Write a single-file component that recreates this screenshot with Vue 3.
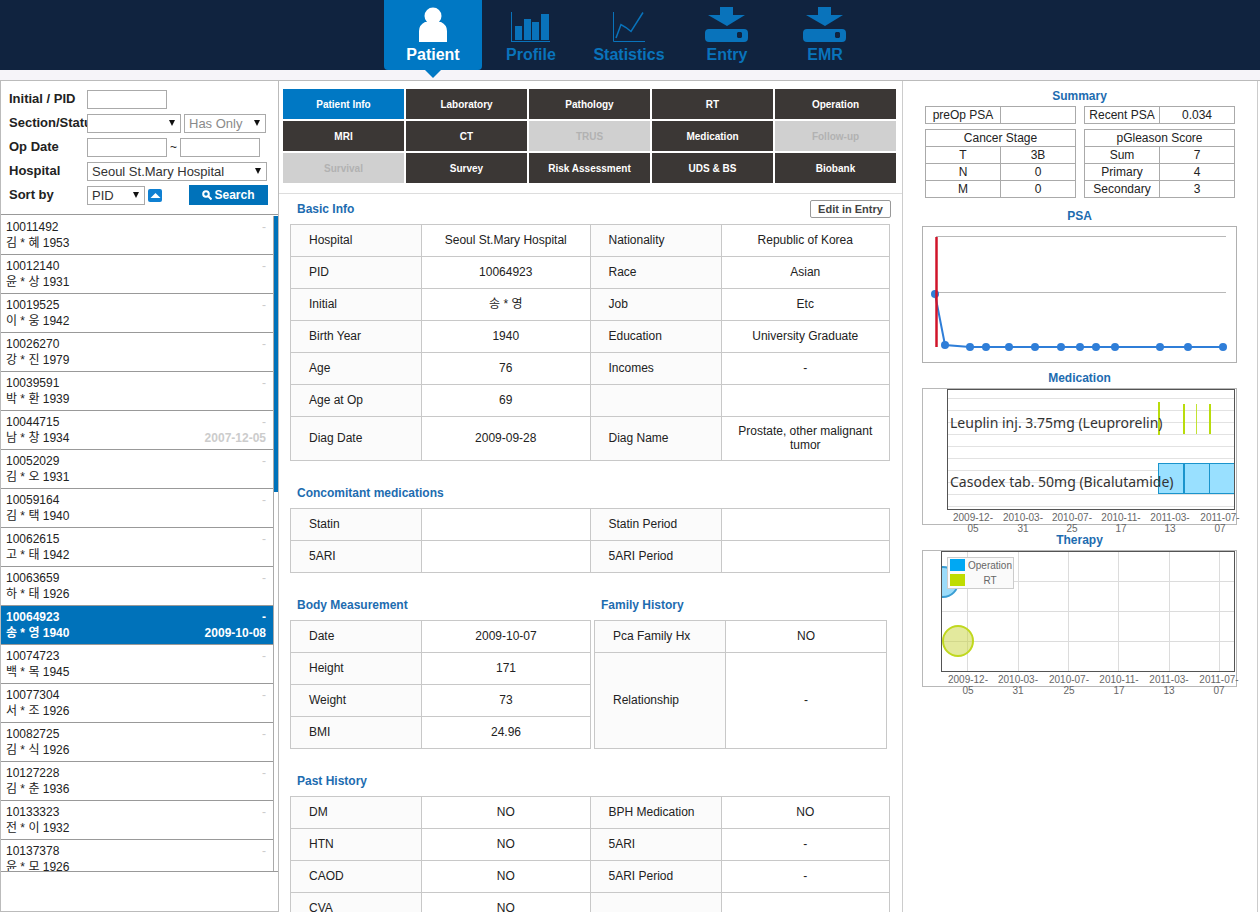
<script setup>
import { ref } from 'vue'

const nav = [
  { label: 'Patient', icon: 'person' },
  { label: 'Profile', icon: 'bars' },
  { label: 'Statistics', icon: 'line' },
  { label: 'Entry', icon: 'drive' },
  { label: 'EMR', icon: 'drive' },
]
const activeNav = ref('Patient')

const patients = [
  { id: '10011492', name: '김 * 혜 1953' },
  { id: '10012140', name: '윤 * 상 1931' },
  { id: '10019525', name: '이 * 웅 1942' },
  { id: '10026270', name: '강 * 진 1979' },
  { id: '10039591', name: '박 * 환 1939' },
  { id: '10044715', name: '남 * 창 1934', date: '2007-12-05' },
  { id: '10052029', name: '김 * 오 1931' },
  { id: '10059164', name: '김 * 택 1940' },
  { id: '10062615', name: '고 * 태 1942' },
  { id: '10063659', name: '하 * 태 1926' },
  { id: '10064923', name: '송 * 영 1940', date: '2009-10-08' },
  { id: '10074723', name: '백 * 목 1945' },
  { id: '10077304', name: '서 * 조 1926' },
  { id: '10082725', name: '김 * 식 1926' },
  { id: '10127228', name: '김 * 춘 1936' },
  { id: '10133323', name: '전 * 이 1932' },
  { id: '10137378', name: '윤 * 모 1926' },
]
const selected = ref('10064923')

const tabs = [
  'Patient Info', 'Laboratory', 'Pathology', 'RT', 'Operation',
  'MRI', 'CT', 'TRUS', 'Medication', 'Follow-up',
  'Survival', 'Survey', 'Risk Assessment', 'UDS & BS', 'Biobank',
]
const disabledTabs = ['TRUS', 'Follow-up', 'Survival']
const activeTab = ref('Patient Info')

const basic = [
  ['Hospital', 'Seoul St.Mary Hospital', 'Nationality', 'Republic of Korea'],
  ['PID', '10064923', 'Race', 'Asian'],
  ['Initial', '송 * 영', 'Job', 'Etc'],
  ['Birth Year', '1940', 'Education', 'University Graduate'],
  ['Age', '76', 'Incomes', '-'],
  ['Age at Op', '69', '', ''],
  ['Diag Date', '2009-09-28', 'Diag Name', 'Prostate, other malignant tumor'],
]
const concomitant = [
  ['Statin', '', 'Statin Period', ''],
  ['5ARI', '', '5ARI Period', ''],
]
const body = [
  ['Date', '2009-10-07'],
  ['Height', '171'],
  ['Weight', '73'],
  ['BMI', '24.96'],
]
const past = [
  ['DM', 'NO', 'BPH Medication', 'NO'],
  ['HTN', 'NO', '5ARI', '-'],
  ['CAOD', 'NO', '5ARI Period', '-'],
  ['CVA', 'NO', '', ''],
]

const psa = [[13, 68], [23, 119], [48, 121], [64, 121], [87, 121], [113, 121], [139, 121], [158, 121], [174, 121], [193, 121], [238, 121], [266, 121], [301, 121]]
const psaLine = psa.map((p) => p.join(',')).join(' ')
const ticks = [['2009-12-', '05'], ['2010-03-', '31'], ['2010-07-', '25'], ['2010-11-', '17'], ['2011-03-', '13'], ['2011-07-', '07']]
const medX = [51, 101, 150, 199, 248, 298]
const therapyX = [46, 96, 147, 197, 247, 297]
</script>

<template>
  <div class="app">
    <header class="top">
      <nav class="nav">
        <a v-for="n in nav" :key="n.label" href="#" :class="{ on: activeNav === n.label }" @click.prevent="activeNav = n.label">
          <svg width="48" height="45" viewBox="0 0 48 45" fill="currentColor" aria-hidden="true">
            <g v-if="n.icon === 'person'">
              <circle cx="24" cy="16" r="8.500" />
              <path d="M10 42V31q0-6 6-9q8 4 16 0q6 3 6 9v11z" />
              <path d="M16 22h16v10H16z" />
            </g>
            <g v-else-if="n.icon === 'bars'">
              <path d="M4 12h1v29h38v1H4z" />
              <path d="M8 26h7v14H8zM17 19h7v21h-7zM25 22h7v18h-7zM34 14h8v26h-8z" />
            </g>
            <g v-else-if="n.icon === 'line'" fill="none" stroke="currentColor">
              <path d="M8.500 12v29.500H40" />
              <path d="M11 38L16 24.500L21 27.500L26 31.500L38 12.500" stroke-width="1.500" />
            </g>
            <g v-else>
              <path d="M17 7h13v8h12L24 26L5 15h12z" />
              <path fill-rule="evenodd" d="M6 29h35q4 0 4 4v5q0 4-4 4H6q-4 0-4-4v-5q0-4 4-4zM34 33v4l1 1h3l1-1v-4l-1-1h-3z" />
            </g>
          </svg>
          <span>{{ n.label }}</span>
        </a>
      </nav>
    </header>

    <div class="columns">
      <aside class="left">
        <form class="search" @submit.prevent>
          <div class="row">
            <label for="pid">Initial / PID</label>
            <input id="pid" type="text" />
          </div>
          <div class="row">
            <label for="section">Section/Status</label>
            <span class="select section"><select id="section"><option></option></select></span>
            <span class="select only"><select aria-label="Has Only"><option>Has Only</option></select></span>
          </div>
          <div class="row">
            <label for="from">Op Date</label>
            <input id="from" type="text" />
            <span class="tilde">~</span>
            <input type="text" aria-label="Op Date to" />
          </div>
          <div class="row">
            <label for="hospital">Hospital</label>
            <span class="select hospital"><select id="hospital"><option>Seoul St.Mary Hospital</option></select></span>
          </div>
          <div class="row">
            <label for="sort">Sort by</label>
            <span class="select sort"><select id="sort"><option>PID</option></select></span>
            <button class="dir" type="button" aria-label="Ascending">
              <svg width="13" height="13" viewBox="0 0 13 13"><path d="M1.500 9L6.500 4L11.500 9z" fill="#fff" /></svg>
            </button>
            <button class="go" type="submit">
              <svg width="10" height="10" viewBox="0 0 10 10" fill="none" stroke="#fff" stroke-width="2"><circle cx="4" cy="4" r="2.800" /><path d="M6 6l3.500 3.500" /></svg>
              Search
            </button>
          </div>
        </form>
        <div class="listbox">
          <ul>
            <li v-for="p in patients" :key="p.id">
              <a href="#" :class="{ on: selected === p.id }" @click.prevent="selected = p.id">
                <span>{{ p.id }}<br />{{ p.name }}</span>
                <span class="when"><span class="dash">-</span><b>{{ p.date }}</b></span>
              </a>
            </li>
          </ul>
          <i class="thumb"></i>
        </div>
      </aside>

      <main>
        <div class="tabs">
          <button v-for="t in tabs" :key="t" type="button" :disabled="disabledTabs.includes(t)" :class="{ on: activeTab === t }" @click="activeTab = t">{{ t }}</button>
        </div>
        <div class="detail">
          <div class="head first"><h2>Basic Info</h2><button type="button" class="edit">Edit in Entry</button></div>
          <table class="info four basic">
            <tbody>
              <tr v-for="r in basic" :key="r[0]"><th>{{ r[0] }}</th><td>{{ r[1] }}</td><th>{{ r[2] }}</th><td>{{ r[3] }}</td></tr>
            </tbody>
          </table>
          <div class="head"><h2>Concomitant medications</h2></div>
          <table class="info four">
            <tbody>
              <tr v-for="r in concomitant" :key="r[0]"><th>{{ r[0] }}</th><td>{{ r[1] }}</td><th>{{ r[2] }}</th><td>{{ r[3] }}</td></tr>
            </tbody>
          </table>
          <div class="pair">
            <section>
              <div class="head"><h2>Body Measurement</h2></div>
              <table class="info two">
                <tbody>
                  <tr v-for="r in body" :key="r[0]"><th>{{ r[0] }}</th><td>{{ r[1] }}</td></tr>
                </tbody>
              </table>
            </section>
            <section>
              <div class="head"><h2>Family History</h2></div>
              <table class="info two">
                <tbody>
                  <tr><th>Pca Family Hx</th><td>NO</td></tr>
                  <tr class="tall"><th>Relationship</th><td>-</td></tr>
                </tbody>
              </table>
            </section>
          </div>
          <div class="head"><h2>Past History</h2></div>
          <table class="info four">
            <tbody>
              <tr v-for="r in past" :key="r[0]"><th>{{ r[0] }}</th><td>{{ r[1] }}</td><th>{{ r[2] }}</th><td>{{ r[3] }}</td></tr>
            </tbody>
          </table>
        </div>
      </main>

      <aside class="right">
        <h2 class="sum">Summary</h2>
        <div class="summary">
          <table><tbody><tr><td>preOp PSA</td><td></td></tr></tbody></table>
          <table><tbody><tr><td>Recent PSA</td><td>0.034</td></tr></tbody></table>
          <table>
            <tbody>
              <tr><td colspan="2">Cancer Stage</td></tr>
              <tr><td>T</td><td>3B</td></tr>
              <tr><td>N</td><td>0</td></tr>
              <tr><td>M</td><td>0</td></tr>
            </tbody>
          </table>
          <table>
            <tbody>
              <tr><td colspan="2">pGleason Score</td></tr>
              <tr><td>Sum</td><td>7</td></tr>
              <tr><td>Primary</td><td>4</td></tr>
              <tr><td>Secondary</td><td>3</td></tr>
            </tbody>
          </table>
        </div>

        <h2 class="psa">PSA</h2>
        <svg class="chart" viewBox="0 0 315 137">
          <rect x="0.500" y="0.500" width="314" height="136" fill="#fff" stroke="#b0b0b0" />
          <path d="M14 10.500H304M14 66.500H304" stroke="#b8b8b8" />
          <polyline :points="psaLine" fill="none" stroke="#2f7ed8" stroke-width="2" />
          <circle v-for="p in psa" :key="p[0]" :cx="p[0]" :cy="p[1]" r="4" fill="#2f7ed8" />
          <path d="M14.500 11V121" stroke="#d0142a" stroke-width="2.500" />
        </svg>

        <h2>Medication</h2>
        <svg class="chart" viewBox="0 0 315 137">
          <rect x="0.500" y="0.500" width="314" height="136" fill="#fff" stroke="#b8b8b8" />
          <path v-for="i in 10" :key="i" :d="`M26 ${i * 12 - 1.5}H312`" stroke="#e2e2e2" />
          <path d="M237 14V47" stroke="#b9dc0c" stroke-width="2" />
          <path d="M262 16V46M288 16V46" stroke="#b9dc0c" stroke-width="2" />
          <path d="M274.500 16V46" stroke="#c3e332" />
          <rect x="236.500" y="75.500" width="76" height="30" fill="#99e0ff" stroke="#1a94cc" />
          <path d="M262 75V106" stroke="#1a94cc" stroke-width="2" />
          <path d="M287.500 75V106" stroke="#1a94cc" />
          <rect x="25.500" y="1.500" width="287" height="120" fill="none" stroke="#545454" />
          <text class="drug" x="28" y="40">Leuplin inj. 3.75mg (Leuprorelin)</text>
          <text class="drug" x="28" y="99">Casodex tab. 50mg (Bicalutamide)</text>
          <g v-for="(t, i) in ticks" :key="t[0] + t[1]" class="tick">
            <text :x="medX[i]" y="133">{{ t[0] }}</text>
            <text :x="medX[i]" y="144">{{ t[1] }}</text>
          </g>
        </svg>

        <h2>Therapy</h2>
        <svg class="chart" viewBox="0 0 315 137">
          <clipPath id="plot"><rect x="19" y="1" width="294" height="121" /></clipPath>
          <rect x="0.500" y="0.500" width="314" height="136" fill="#fff" stroke="#b8b8b8" />
          <path d="M19 31.500H312M19 61.500H312M19 91.500H312M45.500 1V121M96.500 1V121M146.500 1V121M196.500 1V121M247.500 1V121M297.500 1V121" stroke="#dcdcdc" />
          <g clip-path="url(#plot)" stroke-width="2">
            <circle cx="21" cy="32" r="15" fill="#9bdcfa" stroke="#3a9ed4" />
            <circle cx="36" cy="91" r="15" fill="#c8d43c" fill-opacity="0.500" stroke="#c0d81e" />
          </g>
          <rect x="19.500" y="1.500" width="293" height="120" fill="none" stroke="#545454" />
          <rect x="25.500" y="7.500" width="66" height="31" fill="#fafafa" stroke="#ccc" />
          <rect x="28" y="9" width="15" height="12" fill="#00a8f3" />
          <rect x="28" y="24" width="15" height="12" fill="#bfdc00" />
          <g class="tick">
            <text x="68" y="19">Operation</text>
            <text x="68" y="34">RT</text>
          </g>
          <g v-for="(t, i) in ticks" :key="t[0] + t[1]" class="tick">
            <text :x="therapyX[i]" y="133">{{ t[0] }}</text>
            <text :x="therapyX[i]" y="144">{{ t[1] }}</text>
          </g>
        </svg>
      </aside>
    </div>
  </div>
</template>

<style>
body {
  background: #fff;
}
</style>

<style scoped>
.app {
  height: 100vh;
  overflow: hidden;
  display: flex;
  flex-direction: column;
  background: #f6f4f9;
  color: #222;
  font: 12px/16px "Liberation Sans", "Noto Sans CJK KR", sans-serif;
}
.app *,
.app *::after {
  box-sizing: border-box;
}
button,
input,
select {
  font-family: inherit;
  margin: 0;
}
h2 {
  margin: 0;
  font-size: 12px;
  line-height: 16px;
  color: #1d6cb0;
}
.top {
  flex: none;
  height: 70px;
  background: #10233f;
  padding-right: 2px;
}
.nav {
  display: flex;
  justify-content: center;
}
.nav a {
  position: relative;
  width: 98px;
  height: 70px;
  display: flex;
  flex-direction: column;
  align-items: center;
  color: #0973bb;
  font-size: 16px;
  font-weight: bold;
  line-height: 20px;
  text-decoration: none;
}
.nav a.on {
  background: #0078c4;
  color: #fff;
  border-radius: 0 0 4px 4px;
}
.nav a.on::after {
  content: "";
  position: absolute;
  top: 70px;
  border: solid transparent;
  border-width: 8px 8px 0;
  border-top-color: #0078c4;
}
.columns {
  flex: 1;
  min-height: 0;
  margin-top: 10px;
  border-top: 1px solid #bbb;
  padding-right: 2px;
  background: #fff;
  display: grid;
  grid-template-columns: 279px minmax(0, 1fr) 356px;
  grid-template-rows: minmax(0, 1fr);
}
.left {
  display: flex;
  flex-direction: column;
  border: solid #bbb;
  border-width: 0 1px 1px;
  min-height: 0;
}
.search {
  display: flex;
  flex-direction: column;
  gap: 4px;
  padding: 8px 10px 9px 8px;
  border-bottom: 1px solid #999;
}
.row {
  display: flex;
  align-items: center;
  height: 20px;
}
.row label {
  width: 78px;
  flex: none;
  overflow: hidden;
  white-space: nowrap;
  font-size: 13px;
  font-weight: bold;
}
.row input {
  width: 80px;
  height: 19px;
  padding: 0 4px;
  border: 1px solid #aaa;
  background: #fff;
}
.tilde {
  width: 13px;
  text-align: center;
}
.select {
  position: relative;
  height: 19px;
}
.select::after {
  content: "";
  position: absolute;
  right: 6px;
  top: 6px;
  border: solid transparent;
  border-width: 6px 3px 0;
  border-top-color: #111;
}
.select select {
  display: block;
  appearance: none;
  width: 100%;
  height: 19px;
  padding: 0 4px;
  border: 1px solid #aaa;
  border-radius: 0;
  background: #fff;
  color: #333;
  font-size: 13px;
}
.section {
  width: 94px;
}
.only {
  width: 82px;
  margin-left: 3px;
}
.only select {
  color: #8a8a8a;
}
.hospital {
  width: 180px;
}
.sort {
  width: 58px;
}
.dir {
  width: 14px;
  height: 13px;
  margin-left: 3px;
  padding: 0;
  border: 0;
  border-radius: 2px;
  background: #0f80d2;
  display: flex;
  justify-content: center;
}
.go {
  width: 79px;
  height: 20px;
  margin-left: auto;
  padding: 0;
  border: 0;
  background: #0072ba;
  color: #fff;
  font-size: 12px;
  font-weight: bold;
  display: flex;
  align-items: center;
  justify-content: center;
  gap: 2px;
}
.listbox {
  position: relative;
  flex: 1;
  min-height: 0;
  margin-bottom: 39px;
  padding: 1px 4px 0 0;
  border-bottom: 1px solid #999;
}
ul {
  height: 100%;
  margin: 0;
  padding: 0;
  list-style: none;
  overflow: hidden;
  border-right: 1px solid #aaa;
}
li a {
  display: flex;
  justify-content: space-between;
  height: 39px;
  padding: 3px 7px 0 5px;
  border-bottom: 1px solid #999;
  color: #222;
  text-decoration: none;
}
.when {
  display: flex;
  flex-direction: column;
  color: #ccc;
  text-align: right;
}
li a.on,
li a.on .when {
  background: #0072ba;
  color: #fff;
  font-weight: bold;
}
.thumb {
  position: absolute;
  right: 0;
  top: 1px;
  width: 4px;
  height: 276px;
  background: #0072ba;
}
.tabs {
  display: grid;
  grid-template-columns: repeat(5, 1fr);
  gap: 2px;
  padding: 8px 6px 10px 4px;
  border-bottom: 1px solid #ddd;
}
.tabs button {
  height: 30px;
  padding: 0;
  border: 0;
  background: #3b3735;
  color: #fff;
  font-size: 10px;
  font-weight: bold;
}
.tabs button.on {
  background: #0078c4;
}
.tabs button:disabled {
  background: #d0d0d0;
  color: #b2b2b2;
}
.detail {
  padding: 0 12px 0 11px;
}
.head {
  display: flex;
  justify-content: space-between;
  align-items: flex-start;
  height: 47px;
  padding: 24px 0 0 7px;
}
.head.first {
  height: 30px;
  padding-top: 7px;
}
.edit {
  width: 81px;
  height: 18px;
  margin: -1px -1px 0 0;
  padding: 0;
  border: 1px solid #999;
  border-radius: 2px;
  background: #fff;
  color: #444;
  font-size: 11px;
  font-weight: bold;
}
.info {
  width: 100%;
  border-collapse: collapse;
  table-layout: fixed;
}
.info th,
.info td {
  height: 32px;
  padding: 0 12px 2px;
  border: 1px solid #c8c8c8;
  line-height: 14px;
  text-align: center;
}
.info th {
  padding: 0 0 2px 18px;
  background: #fbfbfb;
  font-weight: normal;
  text-align: left;
}
.four th {
  width: 131px;
}
.two th {
  width: 131px;
}
.basic tr:last-child td {
  height: 44px;
}
.info .tall td {
  height: 96px;
}
.pair {
  display: grid;
  grid-template-columns: 301fr 293fr;
  gap: 3px;
  padding-right: 3px;
}
.right {
  border: solid #ccc;
  border-width: 0 1px;
  padding: 7px 20px 0 19px;
}
.right h2 {
  text-align: center;
  padding: 7px 0 2px;
}
.right h2.sum {
  padding: 0 0 2px;
}
.right h2.psa {
  padding: 10px 0 2px;
}
.summary {
  display: grid;
  grid-template-columns: 1fr 1fr;
  gap: 5px 8px;
  padding: 0 2px 0 3px;
}
.summary table {
  width: 100%;
  border-collapse: collapse;
  table-layout: fixed;
}
.summary td {
  height: 17px;
  padding: 0;
  border: 1px solid #aaa;
  line-height: 14px;
  text-align: center;
}
.chart {
  display: block;
  width: 100%;
  overflow: visible;
}
.tick text {
  font-size: 10px;
  text-anchor: middle;
  fill: #666;
}
.drug {
  font-family: "Noto Sans", sans-serif;
  font-size: 14px;
  fill: #333;
}
</style>
